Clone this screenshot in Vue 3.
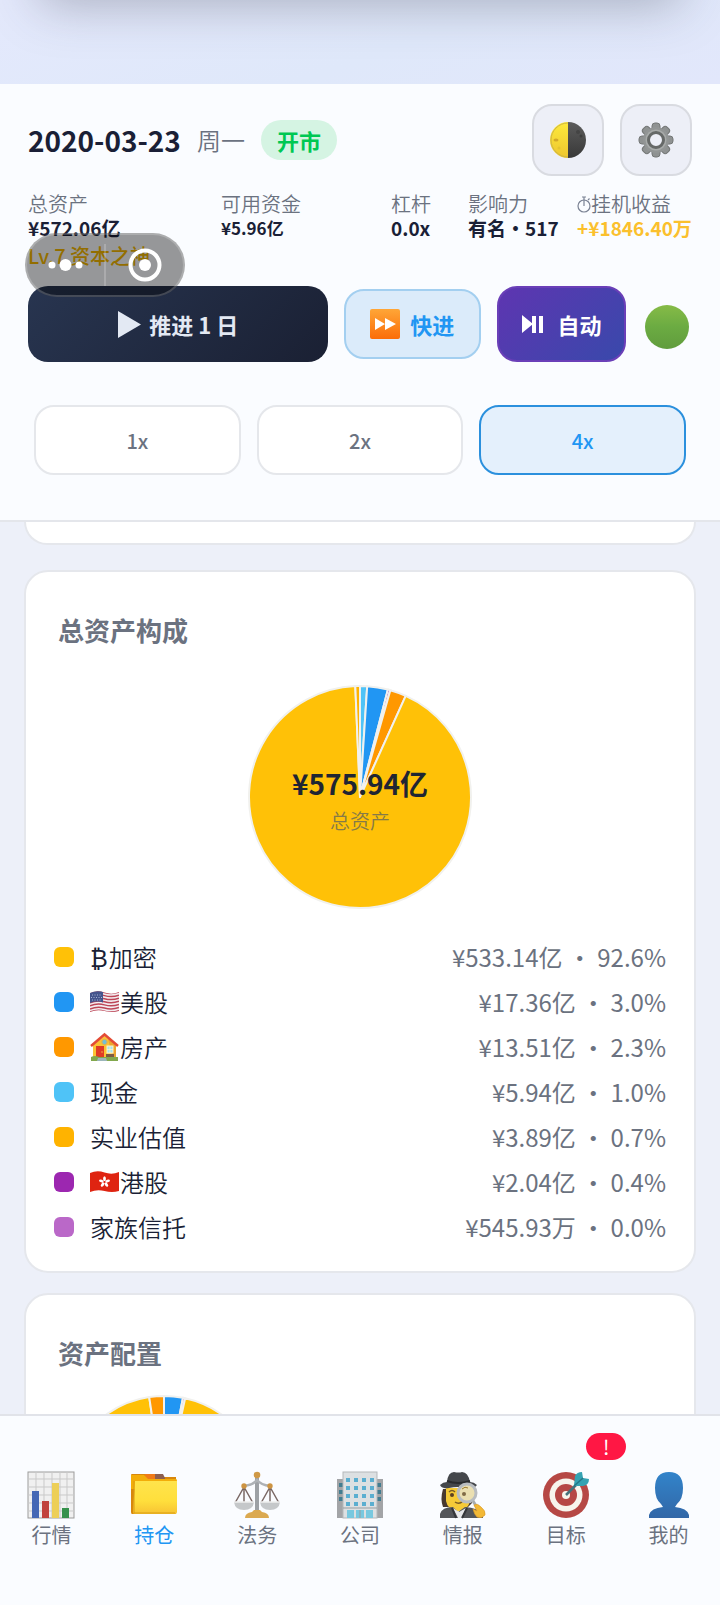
<script setup>
import { ref } from 'vue'

const assets = [
  { name: '加密', icon: 'btc', value: '¥533.14亿', pct: '92.6%', color: '#ffc107' },
  { name: '美股', icon: 'us', value: '¥17.36亿', pct: '3.0%', color: '#2196f3' },
  { name: '房产', icon: 'house', value: '¥13.51亿', pct: '2.3%', color: '#ff9800' },
  { name: '现金', icon: '', value: '¥5.94亿', pct: '1.0%', color: '#4fc3f7' },
  { name: '实业估值', icon: '', value: '¥3.89亿', pct: '0.7%', color: '#ffb300' },
  { name: '港股', icon: 'hk', value: '¥2.04亿', pct: '0.4%', color: '#9c27b0' },
  { name: '家族信托', icon: '', value: '¥545.93万', pct: '0.0%', color: '#ba68c8' },
]

function slices(parts, c, r) {
  const total = parts.reduce((sum, p) => sum + p.v, 0)
  let angle = 0
  return parts.map((p) => {
    const a = angle
    angle += (p.v / total) * Math.PI * 2
    const b = angle
    const large = b - a > Math.PI ? 1 : 0
    return {
      color: p.color,
      d: `M${c} ${c}L${c + r * Math.sin(a)} ${c - r * Math.cos(a)}A${r} ${r} 0 ${large} 1 ${c + r * Math.sin(b)} ${c - r * Math.cos(b)}Z`,
    }
  })
}

const totalPie = slices(
  [
    { v: 5.94, color: '#4fc3f7' },
    { v: 17.36, color: '#2196f3' },
    { v: 2.04, color: '#9c27b0' },
    { v: 0.05, color: '#ba68c8' },
    { v: 13.51, color: '#ff9800' },
    { v: 533.14, color: '#ffc107' },
    { v: 3.89, color: '#ffb300' },
  ],
  112,
  111,
)
const allocPie = slices(
  [
    { v: 17.36, color: '#2196f3' },
    { v: 2.04, color: '#9c27b0' },
    { v: 533.14, color: '#ffc107' },
    { v: 13.51, color: '#ff9800' },
  ],
  100,
  99,
)

const speeds = ['1x', '2x', '4x']
const speed = ref('4x')

const tabs = [
  { id: 'chart', label: '行情' },
  { id: 'folder', label: '持仓' },
  { id: 'scales', label: '法务' },
  { id: 'office', label: '公司' },
  { id: 'detective', label: '情报' },
  { id: 'target', label: '目标', badge: '!' },
  { id: 'person', label: '我的' },
]
const tab = ref('folder')
</script>

<template>
  <div class="app" lang="zh-CN">
    <div class="status"></div>

    <header class="header">
      <div class="date-row">
        <h1 class="date">2020-03-23</h1>
        <span class="weekday">周一</span>
        <span class="open">开市</span>
        <button class="tool first" aria-label="切换主题">
          <svg width="36" height="36" viewBox="0 0 36 36">
            <defs>
              <linearGradient id="moonY" x1="0" y1="0" x2="0" y2="1"><stop offset="0" stop-color="#fdea3c" /><stop offset="1" stop-color="#eec62e" /></linearGradient>
              <linearGradient id="moonD" x1="0" y1="0" x2="0" y2="1"><stop offset="0" stop-color="#5c5c5c" /><stop offset="1" stop-color="#383838" /></linearGradient>
            </defs>
            <path d="M18 0a18 18 0 0 0 0 36z" fill="url(#moonY)" />
            <path d="M18 1A17 17 0 0 0 18 35" fill="none" stroke="#cdb544" stroke-width="1" />
            <path d="M18 0a18 18 0 0 1 0 36z" fill="url(#moonD)" />
            <ellipse cx="6" cy="18" rx="2.5" ry="1.5" fill="#d3a928" />
            <circle cx="9" cy="26" r="1.5" fill="#e5c52e" /><circle cx="28" cy="10" r="2" fill="#444" /><circle cx="31" cy="14" r="1.5" fill="#3d3d3d" />
          </svg>
        </button>
        <button class="tool" aria-label="设置">
          <svg width="36" height="36" viewBox="0 0 36 36">
            <g fill="#8f9292" stroke="#747776" stroke-width="1">
              <g v-for="n in 4" :key="n" :transform="`rotate(${n * 45} 18 18)`"><rect x="14" y="1" width="8" height="34" rx="3" /></g>
            </g>
            <circle cx="18" cy="18" r="13" fill="#929595" />
            <circle cx="18" cy="18" r="10.5" fill="#a8abaa" />
            <circle cx="18" cy="18" r="7.5" fill="#edeff7" stroke="#666968" stroke-width="3" />
          </svg>
        </button>
      </div>

      <dl class="stats">
        <div><dt>总资产</dt><dd>¥572.06亿</dd><dd class="level">Lv.7 资本之神</dd></div>
        <div><dt>可用资金</dt><dd class="cash">¥5.96亿</dd></div>
        <div><dt>杠杆</dt><dd>0.0x</dd></div>
        <div><dt>影响力</dt><dd>有名・517</dd></div>
        <div>
          <dt class="idle">
            <svg width="14" height="18" viewBox="0 0 14 18" fill="none" stroke="#7a8294" stroke-width="1.2"><circle cx="7" cy="11" r="6" /><path d="M7 11V2M5 2h4M11 5l1.5-1.5" /></svg>挂机收益
          </dt>
          <dd class="gain">+¥1846.40万</dd>
        </div>
      </dl>

      <div class="actions">
        <button class="btn advance">
          <svg width="24" height="27" viewBox="0 0 24 27"><path d="M1 0 24 13.5 1 27z" fill="#e3e9f3" /></svg>
          推进 1 日
        </button>
        <button class="btn fast">
          <svg width="30" height="30" viewBox="0 0 30 30">
            <defs><linearGradient id="ffG" x1="0" y1="0" x2="0" y2="1"><stop offset="0" stop-color="#ffa637" /><stop offset="1" stop-color="#fb6d08" /></linearGradient></defs>
            <rect width="30" height="30" rx="2" fill="url(#ffG)" /><path d="M5 9l10 6-10 6zM15 9l11 6-11 6z" fill="#fff" />
          </svg>
          快进
        </button>
        <button class="btn auto">
          <svg width="24" height="18" viewBox="0 0 24 18" fill="#fff"><path d="M1 0l11 9-11 9zM11 1h4v17h-4zM18 1h4v17h-4z" /></svg>
          自动
        </button>
        <span class="lamp"></span>
      </div>

      <div class="speeds">
        <button v-for="s in speeds" :key="s" :class="{ on: speed === s }" @click="speed = s">{{ s }}</button>
      </div>

      <div class="capsule">
        <button aria-label="更多">
          <svg width="36" height="36" viewBox="0 0 36 36" fill="#fff"><circle cx="4" cy="18" r="3.5" /><circle cx="17.5" cy="18" r="6" /><circle cx="31" cy="18" r="3.5" /></svg>
        </button>
        <button aria-label="关闭">
          <svg width="36" height="36" viewBox="0 0 36 36"><circle cx="18" cy="18" r="14.5" fill="none" stroke="#fff" stroke-width="4" /><circle cx="18" cy="18" r="6" fill="#fff" /></svg>
        </button>
      </div>
    </header>

    <main class="content">
      <section class="card previous"></section>

      <section class="card">
        <h2>总资产构成</h2>
        <div class="pie">
          <svg width="224" height="224" viewBox="0 0 224 224" stroke="#f1f1ee" stroke-width="2" stroke-linejoin="round">
            <path v-for="(s, i) in totalPie" :key="i" :d="s.d" :fill="s.color" />
          </svg>
          <div class="pie-label"><strong>¥575.94亿</strong><span>总资产</span></div>
        </div>
        <ul class="legend">
          <li v-for="a in assets" :key="a.name">
            <i class="swatch" :style="{ background: a.color }"></i>
            <span class="name">
              <span v-if="a.icon === 'btc'">₿</span>
              <svg v-else-if="a.icon === 'us'" width="29" height="22" viewBox="0 0 29 22">
                <defs><clipPath id="wave"><path d="M0 2Q7-1 14.5 1.5T29 1V20Q22 22 14.5 20T0 21z" /></clipPath></defs>
                <g clip-path="url(#wave)">
                  <rect width="29" height="22" fill="#f3edf0" />
                  <path v-for="n in 7" :key="n" :d="`M0 ${n * 3.1 - 0.6}Q7 ${n * 3.1 - 3.6} 14.5 ${n * 3.1 - 1.6}T29 ${n * 3.1 - 2.1}`" fill="none" stroke="#bd4657" stroke-width="1.5" />
                  <path d="M0 0H13V11.5Q7 9.5 0 12z" fill="#45548d" />
                  <path d="M2 4h10M1 6.5h11M2 9h10" stroke="#a8b3d3" stroke-width="1" stroke-dasharray="1 1.5" />
                </g>
              </svg>
              <svg v-else-if="a.icon === 'hk'" width="29" height="22" viewBox="0 0 29 22">
                <path d="M0 2Q7-1 14.5 1.5T29 1V20Q22 22 14.5 20T0 21z" fill="#df2411" />
                <g fill="#fff"><ellipse v-for="n in 5" :key="n" cx="14.5" cy="7.8" rx="1.4" ry="2.5" :transform="`rotate(${n * 72} 14.5 11)`" /></g>
                <circle cx="14.5" cy="11" r="1" fill="#df2411" />
              </svg>
              <svg v-else-if="a.icon === 'house'" width="29" height="28" viewBox="0 0 29 28">
                <path d="M3 12 14.5 3 26 12V26H3z" fill="#fbc334" />
                <path d="M18 6l8 6v14h-3z" fill="#eda52d" />
                <path d="M1 13 14.5 1.5 28 13" fill="none" stroke="#e34b35" stroke-width="2.5" />
                <circle cx="14.5" cy="9" r="2.7" fill="#75bfd5" stroke="#e8b146" />
                <rect x="6" y="13" width="8" height="12" fill="#df3b25" /><circle cx="12" cy="19" r=".8" fill="#f6b54a" />
                <rect x="17" y="13" width="6" height="7" fill="#a6e4ef" stroke="#fff3c8" /><path d="M20 13v7M17 16.5h6" stroke="#fff3c8" stroke-width=".8" />
                <path d="M16 21h8v3h-8z" fill="#7c5b43" /><path d="M1 24q4-2 8 0h19v4H1z" fill="#82a84d" /><path d="M8 25h8l1 3H7z" fill="#9bb6bb" />
              </svg>{{ a.name }}
            </span>
            <span class="value">{{ a.value }} ・ {{ a.pct }}</span>
          </li>
        </ul>
      </section>

      <section class="card alloc">
        <h2>资产配置</h2>
        <svg class="alloc-pie" width="200" height="200" viewBox="0 0 200 200" stroke="#f1f1ee" stroke-width="2">
          <path v-for="(s, i) in allocPie" :key="i" :d="s.d" :fill="s.color" />
        </svg>
      </section>
    </main>

    <nav class="tabs">
      <button v-for="t in tabs" :key="t.id" :class="{ on: tab === t.id }" @click="tab = t.id">
        <span v-if="t.badge" class="badge">{{ t.badge }}</span>
        <svg width="48" height="48" viewBox="0 0 48 48">
          <g v-if="t.id === 'chart'">
            <rect x="1" y="1" width="46" height="46" fill="#f0f0f0" stroke="#9b9b9b" />
            <path d="M9 1v46M17 1v46M25 1v46M33 1v46M40 1v46M1 8h46M1 16h46M1 24h46M1 32h46M1 40h46" stroke="#c9c9c9" stroke-width="1" />
            <rect x="5" y="20" width="7" height="27" fill="#4568b5" /><rect x="15" y="30" width="7" height="17" fill="#c1433d" />
            <rect x="25" y="12" width="7" height="35" fill="#edcf58" /><rect x="35" y="37" width="7" height="10" fill="#35914b" />
          </g>
          <g v-else-if="t.id === 'folder'">
            <defs><linearGradient id="fold" x1="0" y1="0" x2="0" y2="1"><stop offset="0" stop-color="#ffe44c" /><stop offset=".6" stop-color="#ffdf3c" /><stop offset="1" stop-color="#f7c333" /></linearGradient></defs>
            <path d="M1 4q0-1 1-1h13l3 3h28v37H2q-1 0-1-2z" fill="#d8870c" />
            <path d="M15 3h12v5H15z" fill="#ef7a18" /><path d="M25 3h8l2 4v2H25z" fill="#8d5f4f" />
            <path d="M1 4h13l4 4h28q1 0 1 2v8H1z" fill="#f3ad09" />
            <path d="M5 10h42v31q0 2-2 2H5q-2 0-2-2z" fill="url(#fold)" /><path d="M4 10v32M4 42h41" stroke="#d99c13" stroke-width="1" />
          </g>
          <g v-else-if="t.id === 'scales'">
            <path d="M24 7v34" stroke="#9da1a5" stroke-width="4" /><path d="M11 15Q20 14 24 9q4 5 13 6" fill="none" stroke="#aeb2b6" stroke-width="2.5" />
            <path d="M11 16 2 32M11 16v16M11 16l9 16M37 16l-9 16M37 16v16M37 16l9 16" fill="none" stroke="#7a6865" stroke-width="1.5" />
            <path d="M1 31h20q-1 8-10 8T1 31zM27 31h20q-1 8-10 8t-10-8z" fill="#c5c8ca" /><path d="M1 31h20M27 31h20" stroke="#eee" stroke-width="1.5" />
            <circle cx="11" cy="15" r="2.7" fill="#cd9442" /><circle cx="37" cy="15" r="2.7" fill="#cd9442" /><circle cx="24" cy="4" r="3.3" fill="#cf9946" />
            <path d="M12 47q0-5 7-6l2-2h6l2 2q7 1 7 6z" fill="#dba950" />
          </g>
          <g v-else-if="t.id === 'office'">
            <path d="M1 8h8v39H1zM39 8h8v39h-8z" fill="#a2a4a7" />
            <path d="M3 14h4M3 21h4M3 28h4M41 14h4M41 21h4M41 28h4" stroke="#427d91" stroke-width="4" />
            <rect x="7" y="1" width="34" height="46" fill="#dce0e2" stroke="#b4b7ba" />
            <g fill="#5aaed0"><g v-for="r in 4" :key="r"><rect v-for="c in 4" :key="c" :x="c * 8 + 2" :y="r * 8 - 1" width="4" height="4" /></g></g>
            <path d="M11 39h7v8h-7zM20 39h8v8h-8zM30 39h7v8h-7z" fill="#78c8df" /><path d="M24 39v8M7 37h34" stroke="#979da1" />
          </g>
          <g v-else-if="t.id === 'detective'">
            <path d="M4 18q-3 10 0 18h8l5 2h10l6-6V16z" fill="#49392f" />
            <path d="M7 17h24v13q-2 10-12 10T7 30z" fill="#f5ca38" />
            <path d="M1 47v-4q2-7 13-7l5 5 7-5q13 1 18 7v4z" fill="#54565a" />
            <path d="M14 37l5 10h4l4-10-7 4z" fill="#e7e8ea" /><path d="M13 37l4 10M28 37l-5 10" stroke="#34363a" stroke-width="2" />
            <path d="M1 14q3-3 7-3 1-10 7-10 5 1 8 0 6 0 8 10 4 0 7 3-3 4-11 3Q19 15 10 17 3 18 1 14z" fill="#44474b" />
            <path d="M8 10q11 4 23 0" fill="none" stroke="#292b2e" stroke-width="2" />
            <path d="M10 21q3-3 6 0M16 31q4 3 8-1" fill="none" stroke="#795c25" stroke-width="1.5" /><circle cx="13" cy="24" r="2" fill="#5b4024" />
            <circle cx="28" cy="22" r="9" fill="#eadfb1" stroke="#b8bcc0" stroke-width="3" /><circle cx="25" cy="23" r="2" fill="#806b47" /><path d="M23 18q3-3 6-1" stroke="#9c7b2d" fill="none" />
            <path d="M34 30l5 8" stroke="#a9adb0" stroke-width="3" /><path d="M35 34q4-2 7 2 5 4 4 8-3 4-8 2-3-3-4-8l4 2z" fill="#f3b936" stroke="#dc9e2b" stroke-width=".7" />
          </g>
          <g v-else-if="t.id === 'target'">
            <circle cx="24" cy="24" r="23" fill="#b64845" /><circle cx="24" cy="24" r="16.5" fill="#f7f5ed" /><circle cx="24" cy="24" r="11" fill="#b64845" /><circle cx="24" cy="24" r="4" fill="#f7f5ed" />
            <path d="M24 24 40 8" stroke="#45717b" stroke-width="2.5" /><path d="M32 14 33 5q2-4 7-4l1 6 6 1q0 6-6 7h-8z" fill="#34a2b2" /><path d="M32 15 41 7" stroke="#237787" stroke-width="1.5" />
          </g>
          <g v-else>
            <defs><linearGradient id="man" x1="0" y1="0" x2="0" y2="1"><stop offset="0" stop-color="#3284ca" /><stop offset="1" stop-color="#3267a7" /></linearGradient></defs>
            <path d="M24 1q14 0 14 16 0 11-6 16l-2 3q12 1 14 8v3H4v-3q2-7 14-8l-2-3q-6-5-6-16Q10 1 24 1z" fill="url(#man)" />
          </g>
        </svg>
        <span>{{ t.label }}</span>
      </button>
    </nav>
  </div>
</template>

<style>
html, body { margin: 0; }
</style>

<style scoped>
.app {
  display: flex;
  flex-direction: column;
  height: 100vh;
  overflow: hidden;
  background: #edf0f9;
  color: #1a1f36;
  font-family: "Noto Sans CJK SC", sans-serif;
}
.app * { box-sizing: border-box; }
button {
  padding: 0;
  border: 0;
  background: none;
  color: inherit;
  font: inherit;
  cursor: pointer;
}
svg { display: block; flex: none; overflow: visible; }

.status {
  position: relative;
  flex: none;
  height: 84px;
  overflow: hidden;
  background: linear-gradient(160deg, #e4e9fc, #dfe8fa 55%, #e2e7fb);
}
.status::before {
  content: "";
  position: absolute;
  inset: -60px 48px auto;
  height: 52px;
  box-shadow: 0 4px 50px 8px rgba(60, 62, 80, 0.35);
}

.header {
  position: relative;
  z-index: 1;
  flex: none;
  padding: 20px 28px 45px;
  background: #fafcff;
  border-bottom: 2px solid #e4e6eb;
}
.date-row { display: flex; align-items: center; height: 72px; }
.date { margin: 0; font-size: 28px; line-height: 40px; font-weight: 700; }
.weekday { margin-left: 16px; color: #6b7280; font-size: 24px; line-height: 40px; }
.open {
  margin-left: 16px;
  padding: 0 16px;
  border-radius: 20px;
  background: #d5f4e3;
  color: #00c853;
  font-size: 22px;
  line-height: 40px;
  font-weight: 700;
}
.tool {
  display: grid;
  place-items: center;
  width: 72px;
  height: 72px;
  border: 2px solid #d9dbe1;
  border-radius: 20px;
  background: #edeff7;
}
.tool + .tool { margin-left: 16px; }
.first { margin-left: auto; }

.stats {
  display: grid;
  grid-template-columns: 193fr 170fr 77fr 109fr 115fr;
  height: 90px;
  margin: 16px 0 0;
  font-size: 20px;
  line-height: 24px;
  white-space: nowrap;
}
.stats dt { color: #6b7280; }
.stats dd { margin: 0; font-size: 19px; font-weight: 700; }
.stats .cash { font-size: 17px; }
.stats .level { padding-top: 4px; color: #f5b800; font-size: 20px; font-weight: 500; }
.stats .gain { color: #fbc02d; }
.stats .idle { display: flex; align-items: center; }

.actions { display: flex; align-items: center; gap: 16px; margin-top: 4px; }
.btn {
  display: flex;
  align-items: center;
  justify-content: center;
  height: 76px;
  border-radius: 20px;
  font-size: 22px;
  font-weight: 700;
  white-space: nowrap;
}
.advance { flex: 304; gap: 8px; background: linear-gradient(135deg, #283550, #1a2033); color: #e3e9f3; }
.fast { flex: 135; gap: 10px; height: 70px; border: 2px solid #a3cff0; background: #dbebfa; color: #2196f3; }
.auto { flex: 127; gap: 12px; border: 2px solid #6a3fb8; background: linear-gradient(135deg, #5e35b1, #3949ab); color: #fff; }
.lamp {
  flex: none;
  width: 44px;
  height: 44px;
  margin: 6px 3px 0;
  border-radius: 50%;
  background: linear-gradient(#86bb47, #6bab42 50%, #609c3d);
}

.speeds { display: flex; gap: 16px; margin-top: 43px; padding: 0 6px; }
.speeds button {
  flex: 1;
  height: 70px;
  border: 2px solid #e5e7eb;
  border-radius: 20px;
  background: #fff;
  color: #6b7280;
  font-size: 20px;
  font-weight: 500;
}
.speeds .on { border-color: #2b90dd; background: #e4f0fc; color: #2196f3; }

.capsule {
  position: absolute;
  left: 25px;
  top: 149px;
  display: flex;
  align-items: center;
  width: 160px;
  height: 64px;
  border: 2px solid rgba(255, 255, 255, 0.2);
  border-radius: 32px;
  background: rgba(0, 0, 0, 0.4);
}
.capsule button { display: grid; place-items: center; flex: 1; height: 42px; }
.capsule button + button { border-left: 2px solid rgba(255, 255, 255, 0.2); }

.content {
  display: flex;
  flex: 1;
  flex-direction: column;
  gap: 20px;
  min-height: 0;
  padding: 0 24px;
  overflow: hidden;
}
.card {
  flex: none;
  padding: 40px 28px 22px;
  border: 2px solid #e5e7ec;
  border-radius: 24px;
  background: #fff;
}
.previous { height: 23px; margin-bottom: 5px; padding: 0; border-top: 0; border-radius: 0 0 24px 24px; }
.card h2 { margin: 0 4px; color: #6b7280; font-size: 26px; line-height: 36px; font-weight: 700; }
.pie { display: grid; place-items: center; margin-top: 37px; }
.pie > * { grid-area: 1 / 1; }
.pie-label { position: relative; display: flex; flex-direction: column; align-items: center; padding-top: 8px; }
.pie-label strong { font-size: 28px; line-height: 40px; font-weight: 700; color: #1f2533; }
.pie-label span { color: #857a48; font-size: 20px; line-height: 36px; }
.legend { margin: 25px 0 0; padding: 0; list-style: none; }
.legend li { display: flex; align-items: center; height: 45px; font-size: 24px; line-height: 36px; }
.swatch { width: 20px; height: 20px; border-radius: 6px; }
.name { display: flex; align-items: center; gap: 1px; margin-left: 16px; }
.name, .weekday, .stats dt, .pie-label span { font-weight: 350; }
.value { margin-left: auto; color: #6b7280; white-space: nowrap; }
.alloc-pie { margin: 24px 0 0 10px; }

.tabs {
  z-index: 1;
  display: flex;
  flex: none;
  height: 191px;
  border-top: 2px solid #e1e3e9;
  background: #fafcff;
}
.tabs button {
  position: relative;
  display: flex;
  flex: 1;
  flex-direction: column;
  align-items: center;
  padding-top: 55px;
  color: #6b7280;
  font-size: 20px;
  line-height: 32px;
}
.tabs .on { color: #2196f3; }
.badge {
  position: absolute;
  left: 70%;
  top: 17px;
  width: 40px;
  border-radius: 14px;
  background: #ff1744;
  color: #fff;
  line-height: 27px;
  text-align: center;
}
</style>
